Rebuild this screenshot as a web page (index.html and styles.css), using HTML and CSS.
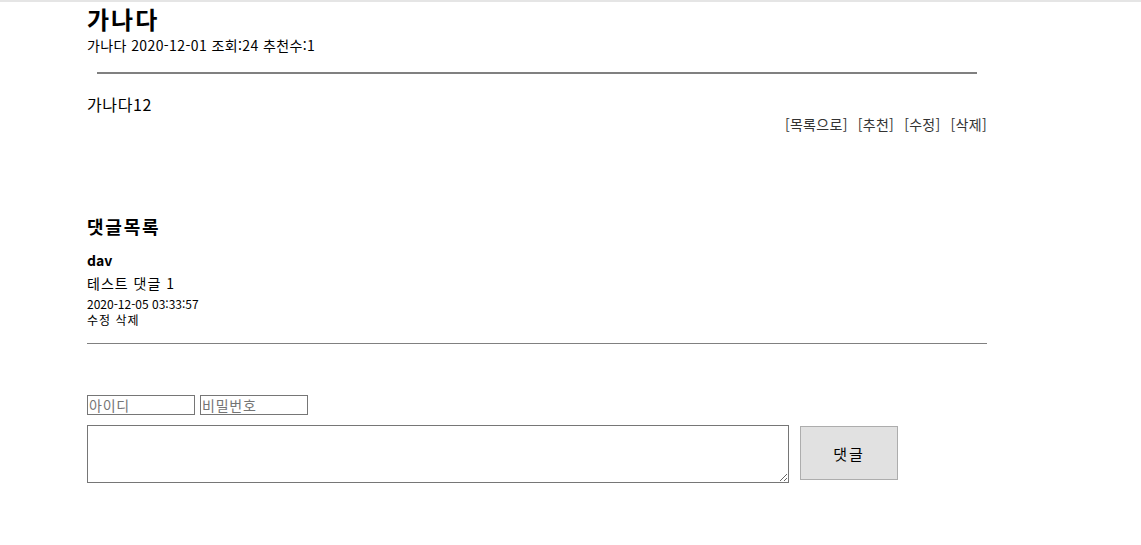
FILE: index.html
```html
<!DOCTYPE html>
<html lang="ko">
<head>
<meta charset="utf-8">
<link rel="stylesheet" href="styles.css">
</head>
<body>
<div class="page">
  <div class="post-head">
    <h1 class="title">가나다</h1>
    <div class="meta">가나다 2020-12-01 조회:24 추천수:1</div>
  </div>
  <hr class="rule">
  <div class="content">가나다12</div>
  <div class="actions">
    <a>[목록으로]</a><a>[추천]</a><a>[수정]</a><a>[삭제]</a>
  </div>
  <h2 class="cmt-title">댓글목록</h2>
  <div class="cmt">
    <div class="cmt-user">dav</div>
    <div class="cmt-text">테스트 댓글 1</div>
    <div class="cmt-date">2020-12-05 03:33:57</div>
    <div class="cmt-ops">수정 삭제</div>
  </div>
  <form class="cmt-form">
    <div class="cred">
      <input type="text" placeholder="아이디">
      <input type="password" placeholder="비밀번호">
    </div>
    <div class="write">
      <textarea></textarea>
      <button type="button">댓글</button>
    </div>
  </form>
</div>
</body>
</html>
```
FILE: styles.css
```css
html, body { margin: 0; padding: 0; background: #fff; }
body {
  border-top: 2px solid #e5e5e5;
  font-family: "Noto Sans CJK KR", "Noto Sans", sans-serif;
  color: #000;
}
.page { width: 900px; margin-left: 87px; }
.post-head { padding-top: 2px; }
.title { margin: 0; font-size: 24px; font-weight: bold; line-height: 30px; letter-spacing: 2px; }
.meta { font-size: 14px; line-height: 20px; margin-top: 1px; letter-spacing: 0.4px; }
.rule { margin: 17px 10px 0 10px; border: 0; height: 2px; background: #808080; }
.content { font-size: 16px; line-height: 22px; margin-top: 19px; letter-spacing: 0.6px; }
.actions { display: flex; justify-content: flex-end; gap: 10px; font-size: 14px; line-height: 20px; color: #333; margin-top: -1px; letter-spacing: 0.3px; }
.cmt-title { margin: 80px 0 0 0; font-size: 18px; line-height: 24px; font-weight: bold; letter-spacing: 1.8px; }
.cmt { border-bottom: 1px solid #808080; padding-bottom: 15px; margin-top: 12px; }
.cmt-user { font-size: 14px; font-weight: bold; line-height: 20px; }
.cmt-text { font-size: 14px; line-height: 20px; margin-top: 3px; letter-spacing: 1px; }
.cmt-date, .cmt-ops { font-size: 12px; line-height: 16px; }
.cmt-date { margin-top: 3px; }
.cmt-ops { letter-spacing: 1px; }
.cmt-form { margin-top: 51px; }
.cred { display: flex; gap: 5px; }
.cred input {
  box-sizing: border-box; width: 108px; height: 20px; margin: 0; padding: 0 1px;
  border: 1px solid #767676; font-family: inherit; font-size: 14px; line-height: 18px; letter-spacing: 0.8px;
}
.cred input::placeholder { color: #757575; }
.write { display: flex; align-items: flex-start; margin-top: 10px; gap: 11px; }
.write textarea {
  box-sizing: border-box; width: 702px; height: 58px; margin: 0;
  border: 1px solid #767676; font-family: inherit; font-size: 14px;
}
.write button {
  box-sizing: border-box; width: 98px; height: 54px; margin-top: 1px;
  background: #e1e1e1; border: 1px solid #adadad; font-family: inherit; font-size: 15px; color: #000; letter-spacing: 2px;
}
```
